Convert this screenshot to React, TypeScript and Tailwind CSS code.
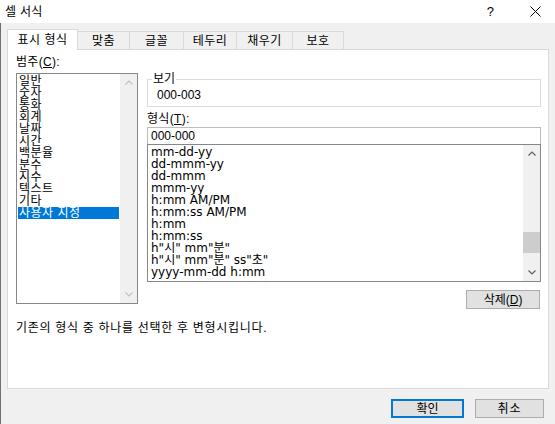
import React from 'react';

const categories = ['일반', '숫자', '통화', '회계', '날짜', '시간', '백분율', '분수', '지수', '텍스트', '기타', '사용자 지정'];

const formats = [
  'mm-dd-yy',
  'dd-mmm-yy',
  'dd-mmm',
  'mmm-yy',
  'h:mm AM/PM',
  'h:mm:ss AM/PM',
  'h:mm',
  'h:mm:ss',
  'h"시" mm"분"',
  'h"시" mm"분" ss"초"',
  'yyyy-mm-dd h:mm',
];

const tabs = [
  { label: '표시 형식', w: 'w-[71px]' },
  { label: '맞춤', w: 'w-[52px]' },
  { label: '글꼴', w: 'w-[54px]' },
  { label: '테두리', w: 'w-[53px]' },
  { label: '채우기', w: 'w-[56px]' },
  { label: '보호', w: 'w-[51px]' },
];

const listFont = { fontFamily: '"DejaVu Sans", "Noto Sans CJK KR", sans-serif' };

function Chevron({ up, color }: { up?: boolean; color: string }) {
  return (
    <svg width="8" height="5" viewBox="0 0 8 5" className="block">
      <path d={up ? 'M0.5 4.5 L4 1 L7.5 4.5' : 'M0.5 0.5 L4 4 L7.5 0.5'} fill="none" stroke={color} strokeWidth="1.2" />
    </svg>
  );
}

function ScrollBar({ thumb, color }: { thumb?: boolean; color: string }) {
  return (
    <div className="flex h-full w-[17px] flex-col bg-[#f0f0f0]">
      <div className="flex h-[17px] items-center justify-center">
        <Chevron up color={color} />
      </div>
      <div className="flex-1">
        {thumb && <div className="mt-[70px] h-[21px] w-full bg-[#cdcdcd]" />}
      </div>
      <div className="flex h-[17px] items-center justify-center">
        <Chevron color={color} />
      </div>
    </div>
  );
}

export default function App() {
  return (
    <div
      className="flex h-[424px] w-[555px] flex-col overflow-hidden bg-[#f0f0f0] text-[12px] text-black"
      style={{ fontFamily: '"Liberation Sans", "Noto Sans CJK KR", sans-serif' }}
    >
      {/* title bar */}
      <div className="flex h-[23px] items-center justify-between bg-white pl-[5px] pr-[14px]">
        <span className="text-[12px] leading-[14px] tracking-[0.3px]">셀 서식</span>
        <div className="flex items-center gap-[36px]">
          <span className="text-[13px] leading-[14px]">?</span>
          <svg width="11" height="11" viewBox="0 0 11 11">
            <path d="M0.5 0.5 L10.5 10.5 M10.5 0.5 L0.5 10.5" stroke="#000" strokeWidth="1" />
          </svg>
        </div>
      </div>

      <div className="flex flex-1 flex-col border-l border-[#707070] pl-[6px] pt-[6px]">
        {/* tabs */}
        <div className="relative z-10 flex h-[20px] items-end">
          {tabs.map((t, i) =>
            i === 0 ? (
              <div
                key={t.label}
                className={`${t.w} -mb-px flex h-[21px] items-center justify-center border-x border-t border-[#d9d9d9] bg-white leading-[14px] tracking-[0.5px]`}
              >
                {t.label}
              </div>
            ) : (
              <div
                key={t.label}
                className={`${t.w} flex h-[18px] items-center justify-center border-r border-t border-[#d9d9d9] bg-[#f0f0f0] leading-[14px] tracking-[0.5px]`}
              >
                {t.label}
              </div>
            )
          )}
        </div>

        {/* panel */}
        <div className="flex h-[340px] w-[542px] flex-col border border-[#d9d9d9] bg-white pl-[8px] pt-[5px]">
          <div className="flex gap-[9px]">
            {/* category */}
            <div className="flex w-[122px] flex-col">
              <div className="h-[14px] leading-[14px] tracking-[0.3px]">
                범주(<u>C</u>):
              </div>
              <div className="mt-[4px] flex h-[231px] border border-[#828790]">
                <div className="flex-1 pl-[1px] pt-[1px]">
                  {categories.map((c, i) => (
                    <div
                      key={c}
                      className={`h-[12px] w-[101px] px-[1px] text-[12px] leading-[12px] tracking-[0.5px] ${
                        i === categories.length - 1 ? 'bg-[#0078d7] text-white' : ''
                      }`}
                    >
                      {c}
                    </div>
                  ))}
                </div>
                <ScrollBar color="#c2c2c2" />
              </div>
            </div>

            {/* right column */}
            <div className="flex w-[394px] flex-col">
              <div className="relative mt-[24px] h-[28px] border border-[#dcdcdc] pl-[9px] pt-[8px] leading-[14px]">
                <span className="absolute -top-[8px] left-[4px] bg-white px-[1px] leading-[14px]">보기</span>
                000-003
              </div>
              <div className="mt-[5px] h-[14px] leading-[14px] tracking-[0.3px]">
                형식(<u>T</u>):
              </div>
              <div className="mt-[1px] h-[17px] border-x border-t border-[#bcbcbc] pl-[3px] pt-[1px] leading-[14px]">
                000-000
              </div>
              <div className="flex h-[138px] border border-[#828790]">
                <div className="flex-1 pl-[3px] pt-[1px]" style={listFont}>
                  {formats.map((f) => (
                    <div key={f} className="h-[12px] text-[12px] leading-[12px] whitespace-pre">
                      {f}
                    </div>
                  ))}
                </div>
                <ScrollBar thumb color="#606060" />
              </div>
              <div className="mt-[8px] flex justify-end pr-[1px]">
                <button className="flex h-[19px] w-[74px] items-center justify-center border border-[#adadad] bg-[#e1e1e1] leading-[14px]">
                  삭제(<u>D</u>)
                </button>
              </div>
            </div>
          </div>
          <div className="mt-[12px] leading-[14px] tracking-[0.7px]">기존의 형식 중 하나를 선택한 후 변형시킵니다.</div>
        </div>

        {/* footer buttons */}
        <div className="mt-[10px] flex justify-end gap-[11px] pr-[11px]">
          <button className="flex h-[19px] w-[73px] items-center justify-center border-2 border-[#0078d7] bg-[#e1e1e1] leading-[14px]">
            확인
          </button>
          <button className="flex h-[19px] w-[69px] items-center justify-center border border-[#adadad] bg-[#e1e1e1] leading-[14px] tracking-[1px]">
            취소
          </button>
        </div>
      </div>
    </div>
  );
}
